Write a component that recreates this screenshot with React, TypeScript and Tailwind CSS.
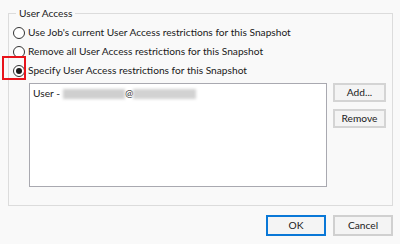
import React from "react";

function Radio({ checked }: { checked?: boolean }) {
  return (
    <span className="flex h-[12px] w-[12px] shrink-0 items-center justify-center rounded-full border border-[#333333] bg-white">
      {checked && <span className="h-[6px] w-[6px] rounded-full bg-[#1a1a1a]" />}
    </span>
  );
}

export default function App() {
  const font = { fontFamily: 'Lato, "Noto Sans", sans-serif' };
  return (
    <div
      className="flex h-[244px] w-[400px] flex-col bg-[#f9f9f9] text-[10.2px] leading-[15px] text-[#1a1a1a]"
      style={font}
    >
      <fieldset className="mx-[8px] mt-[6px] h-[200px] border border-[#dcdcdc] pl-[4px] pr-[6px]">
        <legend className="ml-[3px] px-[3px]">User Access</legend>
        <div className="mt-[4px] flex flex-col gap-[4px]">
          <div className="flex items-center gap-[3px]">
            <Radio />
            <span>Use Job's current User Access restrictions for this Snapshot</span>
          </div>
          <div className="flex items-center gap-[3px]">
            <Radio />
            <span>Remove all User Access restrictions for this Snapshot</span>
          </div>
          <div className="relative flex items-center gap-[3px]">
            <span className="absolute left-[-11px] top-[-7px] h-[24px] w-[24px] border-2 border-[#e8131a]" />
            <Radio checked />
            <span>Specify User Access restrictions for this Snapshot</span>
          </div>
        </div>
        <div className="mt-[5px] flex gap-[6px] pl-[16px]">
          <div className="h-[104px] w-[298px] border border-[#a9a9b0] bg-white px-[3px] pt-[2px]">
            <div className="flex items-center">
              <span>User -</span>
              <span className="ml-[3px] h-[10px] w-[62px] bg-[#cfcfcf] blur-[1.5px]" />
              <span>@</span>
              <span className="h-[10px] w-[63px] bg-[#d2d2d2] blur-[1.5px]" />
            </div>
          </div>
          <div className="flex flex-col gap-[7px]">
            <button className="h-[19px] w-[53px] border-2 border-[#d4d4d4] bg-[#f4f4f4] text-[10.2px] leading-[13px] text-[#1a1a1a]">
              Add...
            </button>
            <button className="h-[19px] w-[53px] border-2 border-[#d4d4d4] bg-[#f4f4f4] text-[10.2px] leading-[13px] text-[#1a1a1a]">
              Remove
            </button>
          </div>
        </div>
      </fieldset>
      <div className="mt-[9px] flex justify-end gap-[7px] pr-[7px]">
        <button className="h-[21px] w-[60px] border-2 border-[#0a78d7] bg-[#f4f4f4] text-[10.2px] text-[#1a1a1a]">
          OK
        </button>
        <button className="h-[21px] w-[60px] border-2 border-[#d0d0d0] bg-[#f4f4f4] text-[10.2px] text-[#1a1a1a]">
          Cancel
        </button>
      </div>
    </div>
  );
}
